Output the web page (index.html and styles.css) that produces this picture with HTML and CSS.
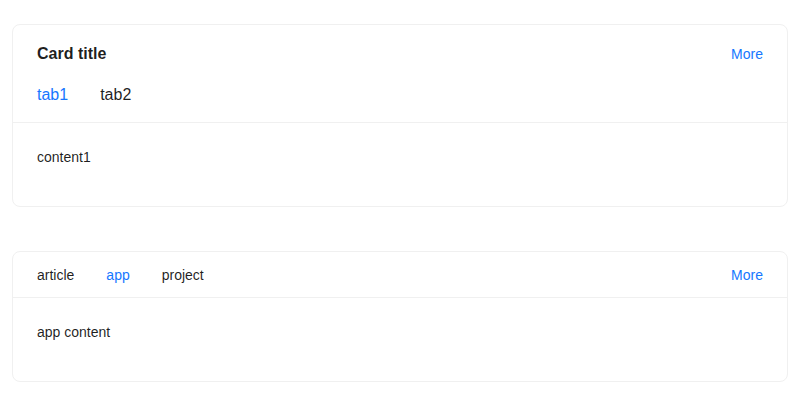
FILE: index.html
```html
<!DOCTYPE html>
<html lang="en">
<head>
<meta charset="utf-8">
<title>Cards</title>
<link rel="stylesheet" href="styles.css">
</head>
<body>
<div class="page">
  <div class="card">
    <div class="card-head">
      <div class="head-row">
        <div class="card-title">Card title</div>
        <a class="more" href="#">More</a>
      </div>
      <div class="tabs tabs-large">
        <div class="tab active">tab1</div>
        <div class="tab">tab2</div>
      </div>
    </div>
    <div class="card-body">
      <p class="content">content1</p>
    </div>
  </div>

  <div class="card">
    <div class="card-head card-head-tabs">
      <div class="tabs">
        <div class="tab">article</div>
        <div class="tab active">app</div>
        <div class="tab">project</div>
      </div>
      <a class="more" href="#">More</a>
    </div>
    <div class="card-body">
      <p class="content">app content</p>
    </div>
  </div>
</div>
</body>
</html>
```
FILE: styles.css
```css
* { box-sizing: border-box; }
html, body {
  margin: 0;
  padding: 0;
  background: #ffffff;
}
body {
  font-family: "Liberation Sans", Arial, sans-serif;
  font-size: 14px;
  color: rgba(0, 0, 0, 0.88);
}
.page {
  padding: 24px 12px;
  display: flex;
  flex-direction: column;
  gap: 44px;
}
.card {
  border: 1px solid #f0f0f0;
  border-radius: 8px;
  background: #fff;
}
.card-head {
  padding: 0 24px;
  border-bottom: 1px solid #f0f0f0;
}
.head-row {
  height: 57px;
  display: flex;
  align-items: center;
  justify-content: space-between;
}
.card-title {
  font-size: 16px;
  font-weight: 700;
  line-height: 24px;
}
.more {
  color: #1677ff;
  text-decoration: none;
  font-size: 14px;
  line-height: 22px;
}
.tabs {
  display: flex;
  gap: 32px;
}
.tabs-large {
  padding: 1px 0 15px;
}
.tabs-large .tab {
  font-size: 16px;
  line-height: 24px;
}
.tab {
  font-size: 14px;
  line-height: 22px;
  color: rgba(0, 0, 0, 0.88);
  cursor: pointer;
}
.tab.active {
  color: #1677ff;
}
.card-head-tabs {
  height: 46px;
  display: flex;
  align-items: center;
  justify-content: space-between;
}
.card-body {
  padding: 23px 24px 24px;
}
.content {
  margin: 0 0 14px;
  line-height: 22px;
}
```
